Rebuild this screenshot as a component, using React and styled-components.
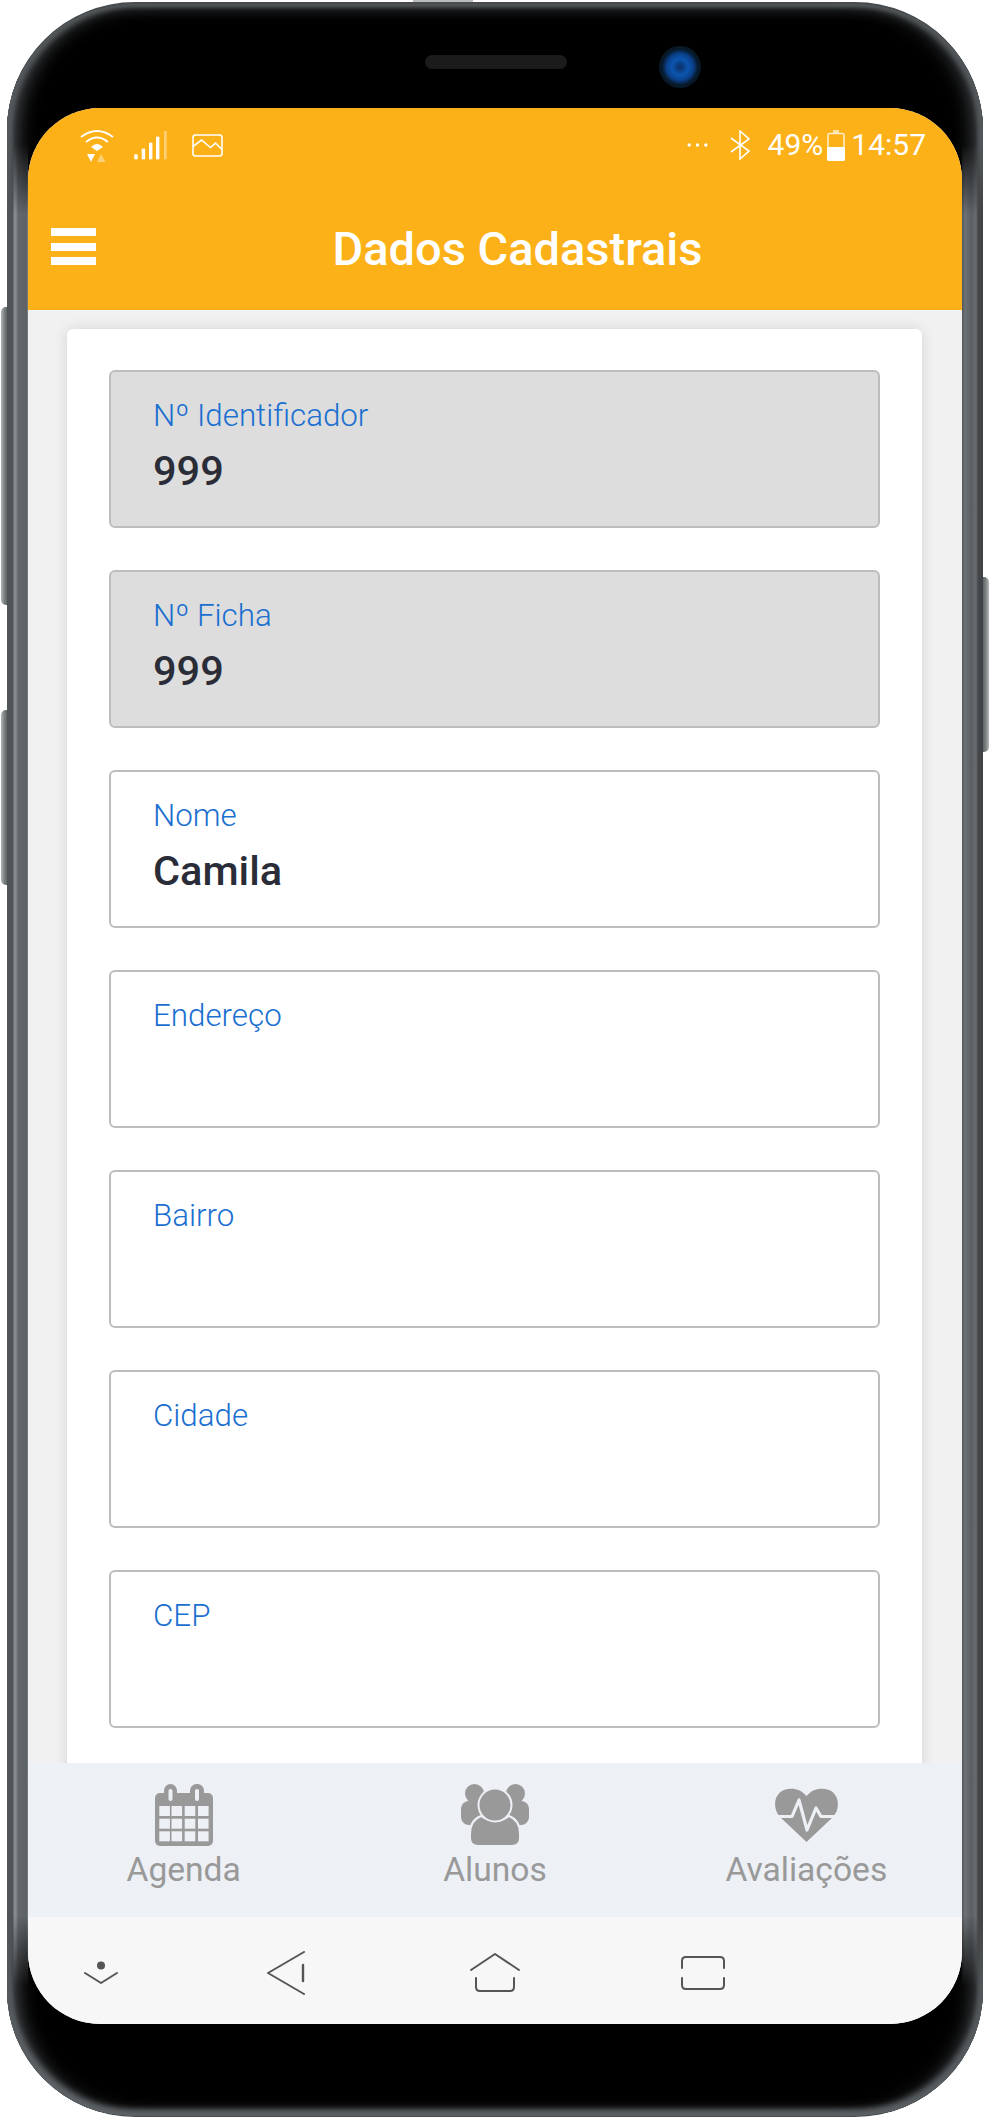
import React from 'react';
import styled, { createGlobalStyle } from 'styled-components';

const GlobalStyle = createGlobalStyle`
  html, body {
    margin: 0;
    padding: 0;
    background: #fff;
    font-family: Roboto, "Liberation Sans", sans-serif;
    overflow: hidden;
  }
`;

const Page = styled.div`
  width: 990px;
  height: 2119px;
  padding: 2px 7px 2px;
  box-sizing: border-box;
`;

const Phone = styled.div`
  position: relative;
  width: 976px;
  height: 2115px;
  border-radius: 128px;
  background: #484c4e;
  padding: 2px 0 1px;
  box-sizing: border-box;
`;

const SideButton = styled.span`
  position: absolute;
  top: ${(p) => p.$top}px;
  height: ${(p) => p.$height}px;
  width: 7px;
  ${(p) => (p.$right ? 'right: -6px;' : 'left: -6px;')}
  border-radius: ${(p) => (p.$right ? '0 5px 5px 0' : '5px 0 0 5px')};
  background: linear-gradient(
    ${(p) => (p.$right ? '90deg' : '270deg')},
    #55595b 0%,
    #7d8283 55%,
    #b4b8b8 100%
  );
`;

const TopNub = styled.span`
  position: absolute;
  top: -2px;
  left: 406px;
  width: 60px;
  height: 2px;
  background: #b9bbbc;
`;

const Bezel = styled.div`
  position: relative;
  height: 100%;
  border-radius: 126px;
  background: #000;
  padding: 0 21px 0 21px;
  box-sizing: border-box;
  box-shadow:
    inset 6px 4px 5px -2px #53585b,
    inset -6px 4px 5px -2px #53585b,
    inset 12px 0 22px -6px #6a6f73,
    inset -12px 0 22px -6px #5c6165,
    inset 6px -8px 6px -3px #565b5e,
    inset -6px -8px 6px -3px #565b5e;

  /* metal side rails, fading out into the corners */
  &::before,
  &::after {
    content: '';
    position: absolute;
    top: 140px;
    bottom: 130px;
    width: 21px;
    -webkit-mask-image: linear-gradient(180deg, transparent 0, #000 70px, #000 calc(100% - 70px), transparent 100%);
    mask-image: linear-gradient(180deg, transparent 0, #000 70px, #000 calc(100% - 70px), transparent 100%);
  }
  &::before {
    left: 0;
    background: linear-gradient(90deg, #4f5456 0, #4f5456 6px, #868b90 7px, #868b90 9px, #63686c 11px, #5d6266 20px, #8c9094 21px);
  }
  &::after {
    right: 0;
    background: linear-gradient(270deg, #3f4244 0, #45484a 5px, #686c70 7px, #5a5f63 12px, #6d7276 18px, #54585c 21px);
  }
`;

const TopBar = styled.div`
  height: 104px;
  display: flex;
  align-items: center;
  padding: 0 0 0 397px;
  box-sizing: border-box;
`;

const Speaker = styled.div`
  width: 142px;
  height: 14px;
  margin-top: 11px;
  border-radius: 7px;
  background: #1b1b1b;
`;

const Camera = styled.div`
  width: 42px;
  height: 42px;
  margin: 22px 0 0 92px;
  border-radius: 50%;
  background: radial-gradient(circle at 50% 50%, #0d2f66 0, #0b55b0 28%, #0a3f86 46%, #071a2c 60%, #0a1620 84%, #030507 100%);
`;

const Screen = styled.div`
  height: 1916px;
  width: 934px;
  border-radius: 72px;
  overflow: hidden;
  display: flex;
  flex-direction: column;
  background: #f1f1f1;
`;

const Header = styled.header`
  height: 202px;
  background: #fdb119;
  color: #fff;
  flex-shrink: 0;
`;

const StatusBar = styled.div`
  height: 34px;
  padding: 20px 36px 0 52px;
  display: flex;
  justify-content: space-between;
  align-items: center;
`;

const StatusGroup = styled.div`
  display: flex;
  align-items: center;
`;

const Glyph = styled.svg`
  display: block;
  flex-shrink: 0;
  margin-left: ${(p) => p.$ml || 0}px;
`;

const StatusText = styled.span`
  font-size: 30px;
  line-height: 34px;
  margin-left: ${(p) => p.$ml || 0}px;
`;

const TitleRow = styled.div`
  position: relative;
  height: 148px;
  display: flex;
  align-items: center;
  justify-content: center;
  padding-left: 45px;
`;

const Hamburger = styled.div`
  position: absolute;
  left: 23px;
  top: 66px;
  width: 45px;
  height: 37px;
  display: flex;
  flex-direction: column;
  justify-content: space-between;

  span {
    display: block;
    height: 8px;
    background: #fff;
  }
`;

const Title = styled.h1`
  margin: 0;
  font-size: 47px;
  font-weight: 500;
  line-height: 60px;
  position: relative;
  top: 13px;
`;

const Content = styled.main`
  flex: 1;
  min-height: 0;
  overflow: hidden;
  padding: 19px 40px 0 39px;
`;

const Card = styled.section`
  background: #fff;
  border-radius: 6px;
  padding: 41px 42px 60px;
  display: flex;
  flex-direction: column;
  gap: 42px;
  box-shadow: 0 0 14px rgba(0, 0, 0, 0.12);
`;

const Field = styled.div`
  height: 158px;
  box-sizing: border-box;
  border: 2px solid #bdbdbd;
  border-radius: 6px;
  padding: 26px 42px 0;
  background: ${(p) => (p.$disabled ? '#dddddd' : '#fff')};
`;

const Label = styled.div`
  font-size: 31.3px;
  font-weight: 300;
  line-height: 36px;
  color: #1a6fd0;
`;

const Value = styled.div`
  margin-top: 12px;
  font-size: 41.5px;
  font-weight: 500;
  line-height: 50px;
  color: #2a2d38;
`;

const TabBar = styled.nav`
  height: 154px;
  flex-shrink: 0;
  background: #edf0f5;
  display: grid;
  grid-template-columns: repeat(3, 1fr);
`;

const Tab = styled.div`
  display: flex;
  flex-direction: column;
  align-items: center;
  padding-top: 21px;
  color: #999;
`;

const TabIconBox = styled.div`
  height: 62px;
  display: flex;
  align-items: center;
`;

const TabLabel = styled.div`
  margin-top: 2px;
  font-size: 33.6px;
  line-height: 44px;
`;

const NavBar = styled.div`
  height: 107px;
  flex-shrink: 0;
  background: #f7f7f7;
  display: grid;
  grid-template-columns: 146px 224px 193px 224px;
  justify-items: center;
  align-items: center;
  padding-top: 5px;
  box-sizing: border-box;
`;

const CalendarIcon = () => (
  <svg width="58" height="62" viewBox="0 0 58 62">
    <rect x="0" y="9" width="58" height="53" rx="5" fill="#999" />
    <rect x="9" y="0" width="13" height="20" rx="6.5" fill="#999" />
    <rect x="35" y="0" width="14" height="20" rx="6.5" fill="#999" />
    <rect x="13.5" y="5" width="4" height="12" rx="2" fill="#edf0f5" />
    <rect x="40" y="5" width="4" height="12" rx="2" fill="#edf0f5" />
    {[22, 34.7, 47.3].map((y) =>
      [4.3, 16.5, 29.7, 43].map((x) => (
        <rect key={`${x}-${y}`} x={x} y={y} width="10.6" height="10" fill="#edf0f5" />
      ))
    )}
  </svg>
);

const UsersIcon = () => (
  <svg width="68" height="62" viewBox="0 0 68 62">
    <circle cx="13.5" cy="9.5" r="9.5" fill="#999" />
    <circle cx="54.5" cy="9.5" r="9.5" fill="#999" />
    <rect x="0" y="17" width="24" height="24" rx="8" fill="#999" />
    <rect x="44" y="17" width="24" height="24" rx="8" fill="#999" />
    <path
      d="M20 32Q35 42 48 32Q59 36 59 50L59 54Q59 62 51 62L17 62Q9 62 9 54L9 50Q9 36 20 32Z"
      fill="#999"
      stroke="#edf0f5"
      strokeWidth="2"
    />
    <circle cx="34" cy="21" r="16.5" fill="#999" stroke="#edf0f5" strokeWidth="2" />
  </svg>
);

const HeartIcon = () => (
  <svg width="63" height="54" viewBox="0 0 63 54">
    <path
      d="M31.5 54L5 29C-3 20-1 6 9 2C17-1 26 1 31.5 8C37 1 46-1 54 2C64 6 66 20 58 29Z"
      fill="#999"
    />
    <path
      d="M-1 28.5L17 28.5L24 12L32 42L41 20L46 28.5L64 28.5"
      fill="none"
      stroke="#edf0f5"
      strokeWidth="3.2"
      strokeLinejoin="round"
    />
  </svg>
);

const NavStroke = { fill: 'none', stroke: '#555', strokeWidth: 2, strokeLinecap: 'round', strokeLinejoin: 'round' };

const fields = [
  { label: 'Nº Identificador', value: '999', disabled: true },
  { label: 'Nº Ficha', value: '999', disabled: true },
  { label: 'Nome', value: 'Camila' },
  { label: 'Endereço' },
  { label: 'Bairro' },
  { label: 'Cidade' },
  { label: 'CEP' },
];

export default function App() {
  return (
    <>
      <GlobalStyle />
      <Page>
        <Phone>
          <SideButton $top={305} $height={298} />
          <SideButton $top={708} $height={175} />
          <SideButton $right $top={575} $height={175} />
          <TopNub />
          <Bezel>
            <TopBar>
              <Speaker />
              <Camera />
            </TopBar>
            <Screen>
              <Header>
                <StatusBar>
                  <StatusGroup>
                    <Glyph width="34" height="34" viewBox="0 0 34 34">
                      <path d="M1 9Q17-3 33 9" fill="none" stroke="#fff" strokeWidth="1.8" />
                      <path d="M6 14Q17 5 28 14" fill="none" stroke="#fff" strokeWidth="1.8" />
                      <path d="M11 19Q17 13 23 19L17 23Z" fill="#fff" />
                      <path d="M7 26L15 26L11 34Z" fill="#fff" />
                      <path d="M17 34L25.5 34L21 26Z" fill="#fff" fillOpacity="0.4" />
                    </Glyph>
                    <Glyph $ml={20} width="33" height="29" viewBox="0 0 33 29">
                      <rect x="0.3" y="23.3" width="3.4" height="5" fill="#fff" />
                      <rect x="7.7" y="17.7" width="3.4" height="10.6" fill="#fff" />
                      <rect x="15" y="11.7" width="3.4" height="16.6" fill="#fff" />
                      <rect x="22" y="5.7" width="3.4" height="22.6" fill="#fff" />
                      <rect x="30" y="0" width="2.7" height="28.3" fill="#fff" fillOpacity="0.4" />
                    </Glyph>
                    <Glyph $ml={25} width="31" height="23" viewBox="0 0 31 23">
                      <rect x="1" y="1" width="29" height="21" rx="2.5" fill="none" stroke="#fff" strokeWidth="1.6" />
                      <path d="M1 12.5L9.5 6L18.5 13.5L23.5 9.2L30 15.5" fill="none" stroke="#fff" strokeWidth="1.6" />
                    </Glyph>
                  </StatusGroup>
                  <StatusGroup>
                    <Glyph width="21" height="6" viewBox="0 0 21 6">
                      <circle cx="2.2" cy="3" r="1.7" fill="#fff" />
                      <circle cx="10.5" cy="3" r="1.7" fill="#fff" />
                      <circle cx="18.8" cy="3" r="1.7" fill="#fff" />
                    </Glyph>
                    <Glyph $ml={22} width="20" height="30" viewBox="0 0 20 30">
                      <path d="M1 8L19 21L10 29L10 1L19 9L1 22" fill="none" stroke="#fff" strokeWidth="1.6" />
                    </Glyph>
                    <StatusText $ml={18}>49%</StatusText>
                    <Glyph $ml={4} width="18" height="31" viewBox="0 0 18 31">
                      <rect x="6" y="0" width="6" height="3" fill="#fff" fillOpacity="0.6" />
                      <rect x="1" y="3.5" width="16" height="26.5" rx="1.5" fill="none" stroke="#fff" strokeOpacity="0.75" strokeWidth="1.6" />
                      <rect x="0" y="17" width="18" height="14" rx="1.5" fill="#fff" />
                    </Glyph>
                    <StatusText $ml={6}>14:57</StatusText>
                  </StatusGroup>
                </StatusBar>
                <TitleRow>
                  <Hamburger>
                    <span />
                    <span />
                    <span />
                  </Hamburger>
                  <Title>Dados Cadastrais</Title>
                </TitleRow>
              </Header>
              <Content>
                <Card>
                  {fields.map((f) => (
                    <Field key={f.label} $disabled={f.disabled}>
                      <Label>{f.label}</Label>
                      {f.value && <Value>{f.value}</Value>}
                    </Field>
                  ))}
                </Card>
              </Content>
              <TabBar>
                <Tab>
                  <TabIconBox><CalendarIcon /></TabIconBox>
                  <TabLabel>Agenda</TabLabel>
                </Tab>
                <Tab>
                  <TabIconBox><UsersIcon /></TabIconBox>
                  <TabLabel>Alunos</TabLabel>
                </Tab>
                <Tab>
                  <TabIconBox><HeartIcon /></TabIconBox>
                  <TabLabel>Avaliações</TabLabel>
                </Tab>
              </TabBar>
              <NavBar>
                <svg width="34" height="24" viewBox="0 0 34 24">
                  <circle cx="17" cy="4.5" r="4" fill="#555" />
                  <path d="M1 12L17 22L33 12" {...NavStroke} />
                </svg>
                <svg width="40" height="44" viewBox="0 0 40 44">
                  <path d="M38 1L2 22L38 43" {...NavStroke} />
                  <path d="M37 14L37 30" {...NavStroke} strokeWidth="2.4" />
                </svg>
                <svg width="50" height="40" viewBox="0 0 50 40">
                  <path d="M1 17L25 1L49 17" {...NavStroke} />
                  <path d="M6 25L6 34Q6 38 10 38L40 38Q44 38 44 34L44 25" {...NavStroke} />
                </svg>
                <svg width="46" height="36" viewBox="0 0 46 36">
                  <path d="M2 13L2 6Q2 2 6 2L40 2Q44 2 44 6L44 13" {...NavStroke} />
                  <path d="M2 23L2 30Q2 34 6 34L40 34Q44 34 44 30L44 23" {...NavStroke} />
                </svg>
              </NavBar>
            </Screen>
          </Bezel>
        </Phone>
      </Page>
    </>
  );
}
